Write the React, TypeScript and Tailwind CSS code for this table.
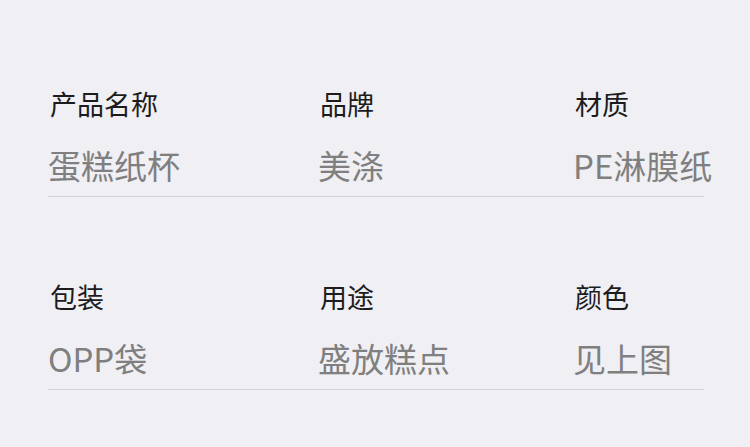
const rows = [
  [
    { label: "产品名称", value: "蛋糕纸杯" },
    { label: "品牌", value: "美涤" },
    { label: "材质", value: "PE淋膜纸" },
  ],
  [
    { label: "包装", value: "OPP袋" },
    { label: "用途", value: "盛放糕点" },
    { label: "颜色", value: "见上图" },
  ],
];

export default function App() {
  return (
    <div
      className="min-h-[447px] w-[750px] bg-[#efeff4] pl-[48px] pt-[90px]"
      style={{ fontFamily: '"Noto Sans CJK SC", "Noto Sans", sans-serif' }}
    >
      <div className="flex w-[656px] flex-col gap-[86px]">
        {rows.map((row, i) => (
          <div key={i} className="grid grid-cols-[270px_255px_1fr] border-b border-[#d3d3d7] pb-[14px]">
            {row.map((item) => (
              <div key={item.label} className="flex flex-col gap-[32px] whitespace-nowrap">
                <span className="pl-[2px] text-[27px] leading-[27px] text-[#1c1c1c]">{item.label}</span>
                <span className="text-[33px] leading-[33px] text-[#7f7f7f]">{item.value}</span>
              </div>
            ))}
          </div>
        ))}
      </div>
    </div>
  );
}
